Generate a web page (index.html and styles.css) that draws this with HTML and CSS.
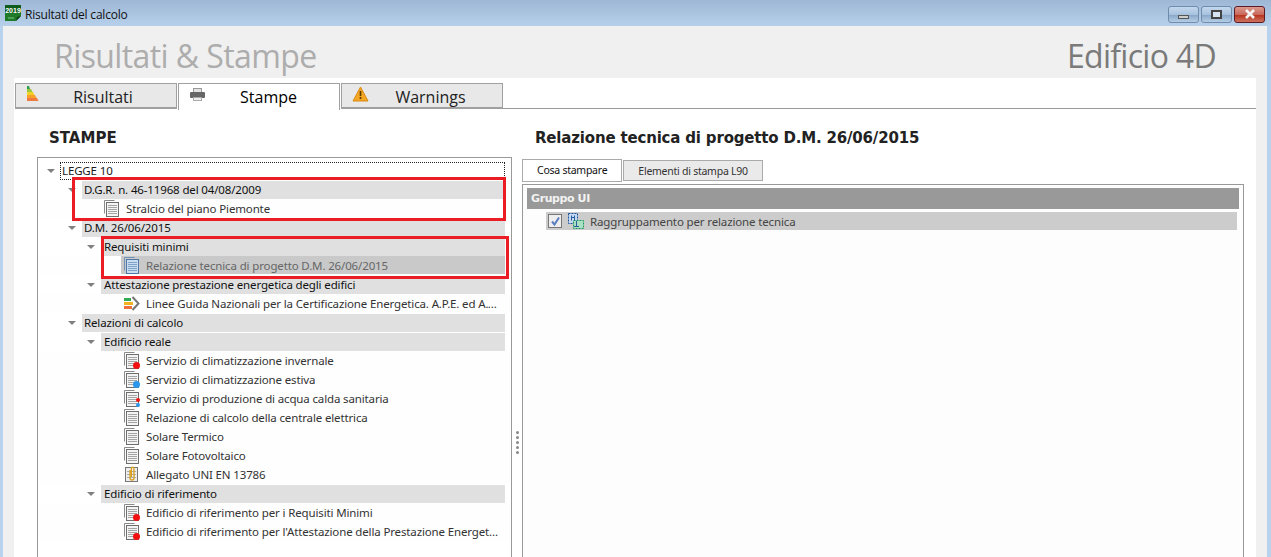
FILE: index.html
```html
<!DOCTYPE html>
<html lang="it">
<head>
<meta charset="utf-8">
<title>Risultati del calcolo</title>
<link rel="stylesheet" href="styles.css">
</head>
<body>
<svg class="defs" width="0" height="0" aria-hidden="true">
  <defs>
    <symbol id="doc" viewBox="0 0 17 17">
      <path d="M1.500 13.500V.5h10" fill="none" stroke="#8a8a8a"/>
      <path d="M3.500 15.500V2.500h10" fill="none" stroke="#b0b0b0"/>
      <rect x="3.500" y="2.500" width="12" height="14" fill="#f4f4f4" stroke="#6e6e6e"/>
      <path d="M5 5.500h9M5 7.500h9M5 9.500h9M5 11.500h9M5 13.500h9" stroke="#a4a4a4"/>
    </symbol>
    <symbol id="doc-blue" viewBox="0 0 17 17">
      <path d="M1.500 13.500V.5h10" fill="none" stroke="#6f93bb"/>
      <rect x="3.500" y="2.500" width="12" height="14" fill="#c9dcf0" stroke="#4f78a6"/>
      <path d="M5 5.500h9M5 7.500h9M5 9.500h9M5 11.500h9M5 13.500h9" stroke="#7fa2c9"/>
    </symbol>
  </defs>
</svg>
<div class="window">
  <header class="titlebar">
    <svg class="app-icon" width="16" height="16" viewBox="0 0 16 16"><path d="M0 0h16v11l-5 5H0z" fill="#1f7a2a"/><path d="M11 16l1-4 4-1z" fill="#0c3d14"/><rect x="0" y="0" width="16" height="8" fill="#0d5c1c"/><path d="M3 13h6" stroke="#7fc97f"/><text x="8" y="7.500" class="app-year">2019</text></svg>
    <span class="window-title">Risultati del calcolo</span>
    <div class="controls">
      <div class="ctl"><i class="ctl-min"></i></div>
      <div class="ctl"><i class="ctl-max"></i></div>
      <div class="ctl ctl-close"><svg width="14" height="10" viewBox="0 0 14 10"><path d="M3 1l8 8M11 1l-8 8" stroke="#f4f4f4" stroke-width="2.600"/></svg></div>
    </div>
  </header>
  <div class="client">
    <div class="heading">
      <h1>Risultati &amp; Stampe</h1>
      <div class="product">Edificio 4D</div>
    </div>
    <div class="tab-area">
      <nav class="main-tabs">
        <div class="main-tab">
          <svg class="tab-icon" width="14" height="18" viewBox="0 0 14 18"><path d="M1 1h2l1 3H1z" fill="#2f9e4f"/><path d="M1 4h4l1.500 3H1z" fill="#9cc73a"/><path d="M1 7h6l1.500 3H1z" fill="#f2d024"/><path d="M1 10h8l1.500 3H1z" fill="#f7a12c"/><path d="M1 13h10l1.500 3H1z" fill="#ee7a3c"/></svg>
          <span>Risultati</span>
        </div>
        <div class="main-tab active">
          <svg class="tab-icon" width="17" height="16" viewBox="0 0 17 16"><rect x="4.500" y="1.500" width="8" height="4" fill="#e4e4e4" stroke="#999"/><rect x="1" y="5" width="15" height="6" rx="1" fill="#666"/><rect x="4.500" y="10.500" width="8" height="3" fill="#eee" stroke="#aaa"/></svg>
          <span>Stampe</span>
        </div>
        <div class="main-tab">
          <svg class="tab-icon" width="17" height="16" viewBox="0 0 17 16"><path d="M8.500 1L16 15H1z" fill="#f5a623" stroke="#d98a12"/><path d="M8.500 5v5M8.500 11v2" stroke="#5b3b00" stroke-width="1.600"/></svg>
          <span>Warnings</span>
        </div>
      </nav>
      <div class="panel">
        <section class="left">
          <h2>STAMPE</h2>
          <div class="tree">
            <div class="row l0"><b class="arrow"></b><span class="focus">LEGGE 10</span></div>
            <div class="row l1"><b class="arrow"></b><span class="band">D.G.R. n. 46-11968 del 04/08/2009</span></div>
            <div class="row leaf l1-leaf"><svg class="ico"><use href="#doc"/></svg><span>Stralcio del piano Piemonte</span></div>
            <div class="row l1"><b class="arrow"></b><span class="band">D.M. 26/06/2015</span></div>
            <div class="row l2"><b class="arrow"></b><span class="band">Requisiti minimi</span></div>
            <div class="row leaf selected"><svg class="ico"><use href="#doc-blue"/></svg><span>Relazione tecnica di progetto D.M. 26/06/2015</span></div>
            <div class="row l2"><b class="arrow"></b><span class="band">Attestazione prestazione energetica degli edifici</span></div>
            <div class="row leaf"><svg class="ico" viewBox="0 0 17 17"><path d="M1 3h7v3H1z" fill="#35a853"/><path d="M1 7h9v3H1z" fill="#f3b21f"/><path d="M1 11h8v3H1z" fill="#ee6f3a"/><path d="M9.500 2l6 6.500-6 6.500" fill="none" stroke="#777" stroke-width="2"/></svg><span>Linee Guida Nazionali per la Certificazione Energetica. A.P.E. ed A.Q.E.</span></div>
            <div class="row l1"><b class="arrow"></b><span class="band">Relazioni di calcolo</span></div>
            <div class="row l2"><b class="arrow"></b><span class="band">Edificio reale</span></div>
            <div class="row leaf"><span class="ico-wrap"><svg class="ico"><use href="#doc"/></svg><i class="dot red"></i></span><span>Servizio di climatizzazione invernale</span></div>
            <div class="row leaf"><span class="ico-wrap"><svg class="ico"><use href="#doc"/></svg><i class="dot blue"></i></span><span>Servizio di climatizzazione estiva</span></div>
            <div class="row leaf"><span class="ico-wrap"><svg class="ico"><use href="#doc"/></svg><i class="dot small red upper"></i><i class="dot small blue"></i></span><span>Servizio di produzione di acqua calda sanitaria</span></div>
            <div class="row leaf"><svg class="ico"><use href="#doc"/></svg><span>Relazione di calcolo della centrale elettrica</span></div>
            <div class="row leaf"><svg class="ico"><use href="#doc"/></svg><span>Solare Termico</span></div>
            <div class="row leaf"><svg class="ico"><use href="#doc"/></svg><span>Solare Fotovoltaico</span></div>
            <div class="row leaf"><svg class="ico" viewBox="0 0 17 17"><rect x="2.500" y="1.500" width="12" height="14" fill="#eee" stroke="#777"/><path d="M4 5.500h9M4 8.500h9M4 11.500h9" stroke="#aaa"/><path d="M7 4v8a2 2 0 0 0 4 0V2.500a1.300 1.300 0 0 0-2.600 0V11" fill="none" stroke="#d9a021" stroke-width="1.300"/></svg><span>Allegato UNI EN 13786</span></div>
            <div class="row l2"><b class="arrow"></b><span class="band">Edificio di riferimento</span></div>
            <div class="row leaf"><span class="ico-wrap"><svg class="ico"><use href="#doc"/></svg><i class="dot red"></i></span><span>Edificio di riferimento per i Requisiti Minimi</span></div>
            <div class="row leaf"><span class="ico-wrap"><svg class="ico"><use href="#doc"/></svg><i class="dot red"></i></span><span>Edificio di riferimento per l'Attestazione della Prestazione Energetica</span></div>
            <div class="callout callout-a"></div>
            <div class="callout callout-b"></div>
          </div>
        </section>
        <div class="splitter"><i></i><i></i><i></i><i></i><i></i></div>
        <section class="right">
          <h2>Relazione tecnica di progetto D.M. 26/06/2015</h2>
          <div class="sub-tabs">
            <div class="sub-tab active">Cosa stampare</div>
            <div class="sub-tab">Elementi di stampa L90</div>
          </div>
          <div class="sub-panel">
            <div class="group">Gruppo UI</div>
            <div class="option">
              <span class="check"><svg width="11" height="11" viewBox="0 0 11 11"><path d="M2 5.500l2.500 3L9 1.500" fill="none" stroke="#5b7fc0" stroke-width="2"/></svg></span>
              <svg class="ui-icon" width="16" height="16" viewBox="0 0 16 16"><rect x="0.500" y="0.500" width="9" height="10" fill="#c5daf2" stroke="#1c4f9c" stroke-dasharray="2 1"/><rect x="5.500" y="7.500" width="10" height="8" fill="#a9e0c4" stroke="#1d9a5f" stroke-dasharray="2 1"/><path d="M3.500 2.500v5M6.500 2.500v5M3.500 4.500h3M8.500 8v5M6 13.500h5" stroke="#2a5d9e"/></svg>
              <span>Raggruppamento per relazione tecnica</span>
            </div>
          </div>
        </section>
      </div>
    </div>
  </div>
</div>
</body>
</html>
```

FILE: styles.css
```css
* { box-sizing: border-box; }
html, body { margin: 0; padding: 0; height: 100%; overflow: hidden; }
body { font-family: "Noto Sans", sans-serif; color: #1a1a1a; }
.defs { position: absolute; }
.window { width: 1271px; height: 557px; display: flex; flex-direction: column; background: #b9d3ee; overflow: hidden; }

.titlebar { height: 26px; flex: none; display: flex; align-items: center; padding: 1px 0 0 5px; background: linear-gradient(#9db7d5, #b7d0ea); }
.app-icon { flex: none; margin-top: -1px; }
.app-year { font: bold 7px "Liberation Sans", sans-serif; fill: #fff; text-anchor: middle; }
.window-title { margin-left: 4px; padding-top: 2px; font: 12px "Open Sans", sans-serif; letter-spacing: -0.2px; color: #111; }
.controls { margin-left: auto; margin-right: 6px; margin-top: 1px; display: flex; gap: 2px; align-self: center; }
.ctl { width: 31px; height: 17px; display: flex; align-items: center; justify-content: center; border: 1px solid #6f8bad; border-radius: 3px; background: linear-gradient(#c4d8ec 0%, #a8c2de 50%, #8aa9ca 55%, #b5cde5 100%); }
.ctl-min { width: 11px; height: 4px; margin-top: 5px; background: #ccc; border: 1px solid #555; }
.ctl-max { width: 11px; height: 9px; border: 2px solid #444; background: #d6e4f2; }
.ctl-close { border-color: #5c1a22; background: linear-gradient(#dc9a8e 0%, #c9685c 50%, #b8351f 55%, #cc7360 100%); }

.client { flex: 1; min-height: 0; margin: 0 4px 0 3px; background: #f0f0f0; display: flex; flex-direction: column; padding: 0 11px; }
.heading { height: 52px; flex: none; display: flex; justify-content: space-between; align-items: center; padding: 6px 40px 0; }
h1 { margin: 0; font: 32px "Open Sans", sans-serif; letter-spacing: -0.6px; color: #adadad; }
.product { font: 32px "Open Sans", sans-serif; letter-spacing: -0.7px; color: #7a7a7a; }

.tab-area { flex: 1; min-height: 0; display: flex; flex-direction: column; background: #fff; }
.main-tabs { height: 31px; flex: none; width: 489px; background: #fff; display: flex; padding: 5px 0 0 1px; gap: 1px; position: relative; z-index: 1; }
.main-tab { width: 162px; height: 26px; border: 1px solid #a0a0a0; border-bottom-width: 2px; background: #e8e8e8; display: flex; align-items: center; padding-left: 10px; font: 16px "Open Sans", sans-serif; letter-spacing: 0; color: #222; }
.main-tab span { flex: 1; text-align: center; padding: 2px 10px 0 0; }
.main-tab.active { background: #fff; border-bottom: none; color: #000; height: 27px; }
.main-tab.active span { padding: 0 8px 0 0; }
.tab-icon { flex: none; margin-bottom: 4px; }

.panel { flex: 1; min-height: 0; display: flex; border-top: 1px solid #999; margin-top: -1px; padding-left: 23px; padding-top: 19px; }
h2 { margin: 0; font: bold 15px "DejaVu Sans", sans-serif; color: #222; height: 20px; line-height: 20px; white-space: nowrap; }
.left { width: 475px; flex: none; display: flex; flex-direction: column; }
.left h2 { padding-left: 12px; }
.tree { position: relative; flex: 1; margin-top: 9px; border: 1px solid #999; border-bottom: none; padding-top: 3px; background: #fff; font: 11.500px "Noto Sans", sans-serif; letter-spacing: -0.14px; }
.row { height: 19px; display: flex; align-items: center; position: relative; white-space: nowrap; padding-right: 6px; }
.row > span:last-child { overflow: hidden; text-overflow: ellipsis; }
.arrow { flex: none; width: 0; height: 0; border: 4px solid transparent; border-top: 4px solid #808080; border-bottom: none; margin-right: 6px; }
.l0 { padding-left: 9px; }
.l1 { padding-left: 30px; }
.l2 { padding-left: 49px; }
.band { flex: 1; background: #e0e0e0; height: 18px; line-height: 17px; padding-left: 3px; color: #111; }
.l1 .band { padding-left: 2px; }
.focus { outline: 1px dotted #222; outline-offset: -1px; height: 18px; line-height: 17px; padding: 0 2px; flex: 1; margin-left: -1px; }
.leaf { padding-left: 85px; padding-right: 12px; color: #333; background: #fefefe; }
.l1-leaf { padding-left: 65px; }
.selected > span:last-child { color: #666; }
.selected::before { content: ""; position: absolute; left: 83px; right: 6px; top: 0; bottom: 1px; background: #c9c9c9; }
.selected > * { position: relative; }
.ico { width: 17px; height: 17px; flex: none; margin-right: 6px; }
.ico-wrap { position: relative; width: 17px; height: 17px; flex: none; margin-right: 6px; display: block; }
.ico-wrap .ico { display: block; margin: 0; }
.dot { position: absolute; right: 0; bottom: 0; width: 7px; height: 7px; border-radius: 50%; }
.dot.small { width: 4px; height: 4px; }
.dot.upper { bottom: 5px; }
.dot.red { background: #f01010; }
.dot.blue { background: #2a96ec; }
.callout { position: absolute; border: 3px solid #ec1c24; pointer-events: none; }
.callout-a { left: 34px; top: 19px; width: 434px; height: 44px; }
.callout-b { left: 63px; top: 78px; width: 408px; height: 43px; }

.splitter { width: 10px; flex: none; display: flex; flex-direction: column; align-items: center; justify-content: center; gap: 2px; padding-top: 199px; }
.splitter i { width: 3px; height: 3px; background: #888; border-radius: 50%; }

.right { flex: 1; min-width: 0; display: flex; flex-direction: column; }
.right h2 { padding-left: 13px; letter-spacing: -0.18px; }
.sub-tabs { display: flex; margin-top: 9px; height: 28px; padding-top: 2px; gap: 1px; flex: none; margin-bottom: -1px; }
.sub-tab { height: 21px; margin-top: 1px; padding: 0 14px; border: 1px solid #aaa; background: #eaeaea; font: 10.500px/20px "Noto Sans", sans-serif; letter-spacing: -0.25px; color: #333; }
.sub-tab.active { background: #fff; height: 23px; margin-top: 0; color: #111; }
.sub-panel { flex: 1; margin: 0 12px 0 0; border: 1px solid #999; border-bottom: none; background: #fdfdfd; padding: 3px 4px; }
.group { height: 21px; background: #999; color: #f2f2f2; padding-left: 4px; font: bold 11px/21px "DejaVu Sans", sans-serif; letter-spacing: -0.4px; }
.option { height: 18px; margin: 3px 2px 0 19px; background: #ccc; display: flex; align-items: center; padding-left: 2px; font: 11.500px "Noto Sans", sans-serif; letter-spacing: -0.14px; color: #444; }
.check { width: 14px; height: 14px; border: 1px solid #777; background: #eee; display: flex; align-items: center; justify-content: center; flex: none; }
.ui-icon { margin: 0 6px; flex: none; }
```
